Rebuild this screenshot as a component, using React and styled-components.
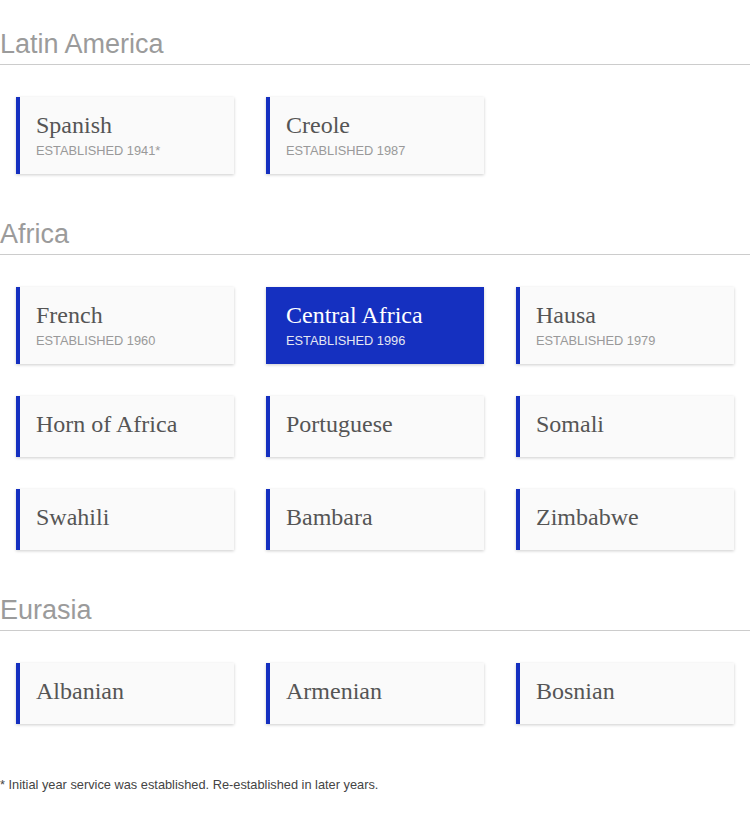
import React from 'react';
import styled, { createGlobalStyle } from 'styled-components';

const GlobalStyle = createGlobalStyle`
  body {
    margin: 0;
    background: #ffffff;
    font-family: "Liberation Sans", Arial, sans-serif;
  }
`;

const PageWrapper = styled.div`
  width: 750px;
  padding-bottom: 32px;
`;

const Section = styled.section`
  display: flex;
  flex-direction: column;
`;

const RegionTitle = styled.h2`
  margin: 0;
  padding: 29px 0 5px;
  font-family: "Liberation Sans", Arial, sans-serif;
  font-weight: 400;
  font-size: 27px;
  line-height: 30px;
  color: #9b9b9b;
  border-bottom: 1px solid #cccccc;
`;

const CardGrid = styled.div`
  display: grid;
  grid-template-columns: repeat(3, 218px);
  column-gap: 32px;
  row-gap: 32px;
  padding: 32px 16px 16px;
  align-items: start;
`;

const Card = styled.div`
  display: flex;
  flex-direction: column;
  padding: 14px 16px 15px;
  background: ${({ $active }) => ($active ? '#1530c0' : '#fafafa')};
  border-left: 4px solid #1530c0;
  box-shadow: 0 1px 3px rgba(0, 0, 0, 0.2);
  cursor: pointer;
`;

const CardTitle = styled.div`
  margin: 0 0 4px;
  font-family: "Liberation Serif", "Times New Roman", serif;
  font-size: 24px;
  line-height: 28px;
  color: ${({ $active }) => ($active ? '#ffffff' : '#555555')};
`;

const CardMeta = styled.div`
  font-family: "Liberation Sans", Arial, sans-serif;
  font-size: 12.8px;
  line-height: 16px;
  text-transform: uppercase;
  color: ${({ $active }) => ($active ? '#e4e6f2' : '#999999')};
`;

const Footnote = styled.p`
  margin: 37px 0 0;
  font-family: "Liberation Sans", Arial, sans-serif;
  font-size: 12.8px;
  line-height: 15px;
  color: #444444;
`;

const regions = [
  {
    name: 'Latin America',
    services: [
      { name: 'Spanish', established: '1941*' },
      { name: 'Creole', established: '1987' },
    ],
  },
  {
    name: 'Africa',
    services: [
      { name: 'French', established: '1960' },
      { name: 'Central Africa', established: '1996', active: true },
      { name: 'Hausa', established: '1979' },
      { name: 'Horn of Africa' },
      { name: 'Portuguese' },
      { name: 'Somali' },
      { name: 'Swahili' },
      { name: 'Bambara' },
      { name: 'Zimbabwe' },
    ],
  },
  {
    name: 'Eurasia',
    services: [
      { name: 'Albanian' },
      { name: 'Armenian' },
      { name: 'Bosnian' },
    ],
  },
];

const App = () => {
  return (
    <PageWrapper>
      <GlobalStyle />
      {regions.map((region) => (
        <Section key={region.name}>
          <RegionTitle>{region.name}</RegionTitle>
          <CardGrid>
            {region.services.map((service) => (
              <Card key={service.name} $active={service.active}>
                <CardTitle $active={service.active}>{service.name}</CardTitle>
                {service.established && (
                  <CardMeta $active={service.active}>
                    Established {service.established}
                  </CardMeta>
                )}
              </Card>
            ))}
          </CardGrid>
        </Section>
      ))}
      <Footnote>* Initial year service was established. Re-established in later years.</Footnote>
    </PageWrapper>
  );
};

export default App;
